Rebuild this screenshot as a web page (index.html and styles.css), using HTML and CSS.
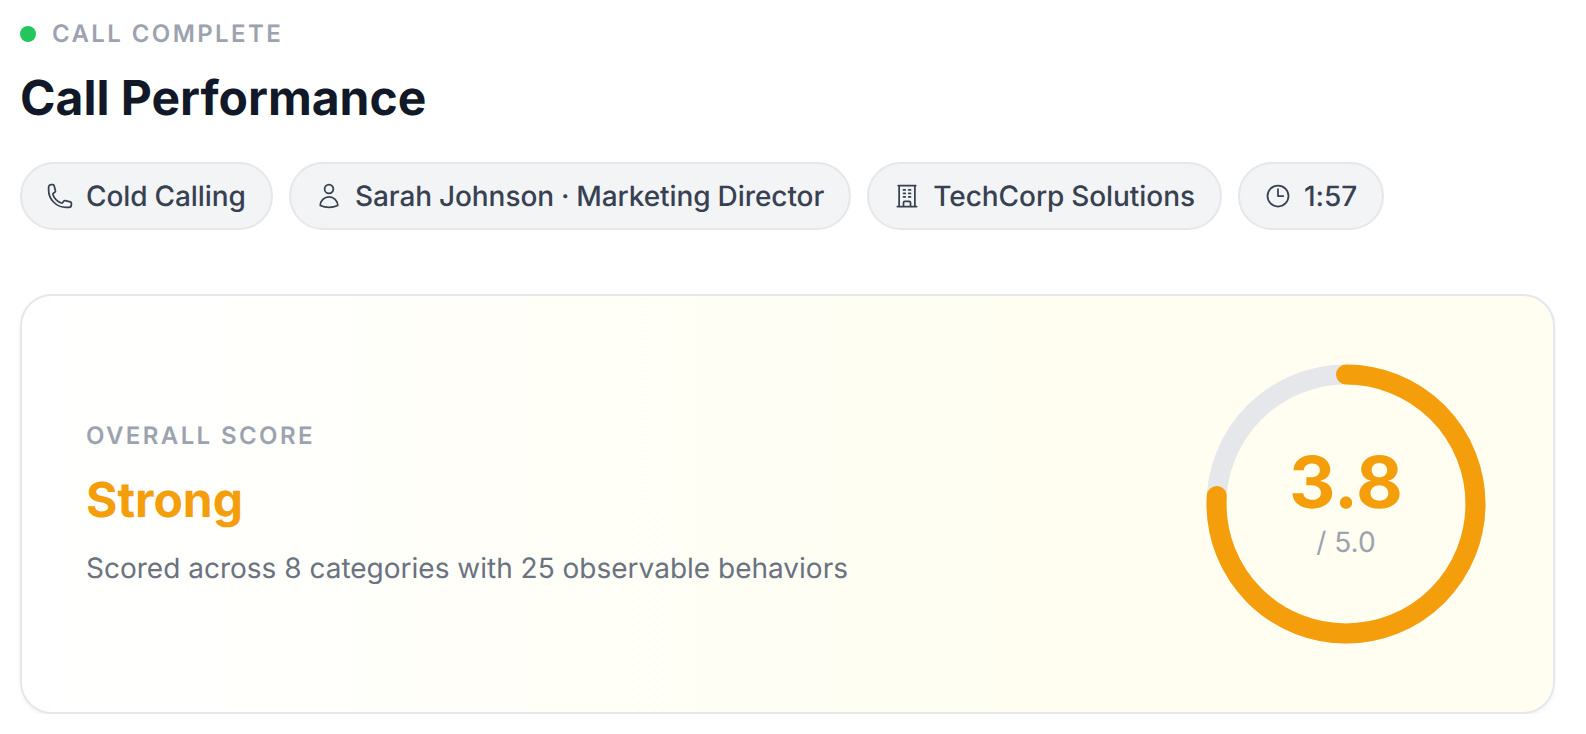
FILE: index.html
```html
<!DOCTYPE html>
<html lang="en">
<head>
    <meta charset="UTF-8">
    <meta name="viewport" content="width=device-width, initial-scale=1.0">
    <title>Call Performance</title>
    <link rel="stylesheet" href="styles.css">
</head>
<body>

    <div class="status">
        <span class="status-dot"></span>
        <span class="status-text">CALL COMPLETE</span>
    </div>

    <h1>Call Performance</h1>

    <div class="chips">
        <div class="chip">
            <svg class="chip-icon" viewBox="0 0 24 24"><path d="M2.25 6.75c0 8.284 6.716 15 15 15h2.25a2.25 2.25 0 002.25-2.25v-1.372c0-.516-.351-.966-.852-1.091l-4.423-1.106c-.44-.11-.902.055-1.173.417l-.97 1.293c-.282.376-.769.542-1.21.38a12.035 12.035 0 01-7.143-7.143c-.162-.441.004-.928.38-1.21l1.293-.97c.363-.271.527-.734.417-1.173L6.963 3.102a1.125 1.125 0 00-1.091-.852H4.5A2.25 2.25 0 002.25 4.5v2.25z"/></svg>
            Cold Calling
        </div>
        <div class="chip">
            <svg class="chip-icon" viewBox="0 0 24 24"><path d="M15.75 6a3.75 3.75 0 11-7.5 0 3.75 3.75 0 017.5 0zM4.501 20.118a7.5 7.5 0 0114.998 0A17.933 17.933 0 0112 21.75c-2.676 0-5.216-.584-7.499-1.632z"/></svg>
            Sarah Johnson · Marketing Director
        </div>
        <div class="chip">
            <svg class="chip-icon" viewBox="0 0 24 24"><path d="M3.75 21h16.5M4.5 3h15M5.25 3v18m13.5-18v18M9 6.75h1.5m-1.5 3h1.5m-1.5 3h1.5m3-6H15m-1.5 3H15m-1.5 3H15M9 21v-3.375c0-.621.504-1.125 1.125-1.125h3.75c.621 0 1.125.504 1.125 1.125V21"/></svg>
            TechCorp Solutions
        </div>
        <div class="chip">
            <svg class="chip-icon" viewBox="0 0 24 24"><path d="M12 6v6h4.5m4.5 0a9 9 0 11-18 0 9 9 0 0118 0z"/></svg>
            1:57
        </div>
    </div>

    <div class="score-card">
        <div class="score-info">
            <div class="score-label">OVERALL SCORE</div>
            <div class="score-rating">Strong</div>
            <div class="score-note">Scored across 8 categories with 25 observable behaviors</div>
        </div>
        <div class="ring">
            <svg class="ring-svg" viewBox="0 0 280 280">
                <circle class="ring-track" cx="140" cy="140" r="129.5"/>
                <circle class="ring-fill" cx="140" cy="140" r="129.5" pathLength="100" stroke-dasharray="76 100" transform="rotate(-90 140 140)"/>
            </svg>
            <div class="ring-text">
                <div class="ring-value">3.8</div>
                <div class="ring-max">/ 5.0</div>
            </div>
        </div>
    </div>

</body>
</html>
```

FILE: styles.css
```css
body {
    margin: 0;
    padding: 20px 31px 0 20px;
    background: #fff;
    font-family: Inter, "Liberation Sans", sans-serif;
    text-rendering: geometricPrecision;
}
.status {
    display: flex;
    align-items: center;
    gap: 16px;
    height: 27px;
}
.status-dot {
    width: 16px;
    height: 16px;
    border-radius: 50%;
    background-color: #22c55e;
}
.status-text {
    font-size: 24px;
    font-weight: 600;
    letter-spacing: 2.4px;
    color: #9ca3af;
}
h1 {
    margin: 21px 0 34px;
    font-size: 48px;
    line-height: 60px;
    font-weight: 700;
    color: #111827;
}
.chips {
    display: flex;
    gap: 16px;
    margin-bottom: 64px;
}
.chip {
    display: flex;
    align-items: center;
    gap: 12px;
    height: 68px;
    box-sizing: border-box;
    padding: 0 25px 0 24px;
    border: 2px solid #e5e7eb;
    border-radius: 34px;
    background-color: #f3f4f6;
    font-size: 28px;
    font-weight: 500;
    letter-spacing: -0.05px;
    word-spacing: -0.6px;
    color: #374151;
}
.chip-icon {
    width: 28px;
    height: 28px;
    fill: none;
    stroke: #374151;
    stroke-width: 1.5;
    stroke-linecap: round;
    stroke-linejoin: round;
}
.score-card {
    display: flex;
    align-items: center;
    justify-content: space-between;
    height: 420px;
    box-sizing: border-box;
    padding: 0 67px 0 64px;
    border: 2px solid #e5e7eb;
    border-radius: 32px;
    background: linear-gradient(90deg, #ffffff, #fffef0 70%);
    box-shadow: 0 2px 4px rgba(0, 0, 0, 0.05);
}
.score-info {
    margin-bottom: 2px;
}
.score-label {
    font-size: 24px;
    font-weight: 600;
    letter-spacing: 2.4px;
    color: #9ca3af;
}
.score-rating {
    margin: 20px 0 22px;
    font-size: 48px;
    font-weight: 700;
    color: #f59e0b;
}
.score-note {
    font-size: 28px;
    color: #6b7280;
}
.ring {
    position: relative;
    width: 280px;
    height: 280px;
}
.ring-svg {
    display: block;
    width: 280px;
    height: 280px;
}
.ring-track {
    fill: none;
    stroke: #e5e7eb;
    stroke-width: 20;
}
.ring-fill {
    fill: none;
    stroke: #f59e0b;
    stroke-width: 20;
    stroke-linecap: round;
}
.ring-text {
    position: absolute;
    inset: 0;
    display: flex;
    flex-direction: column;
    align-items: center;
    justify-content: center;
}
.ring-value {
    font-size: 72px;
    line-height: 76px;
    font-weight: 700;
    color: #f59e0b;
}
.ring-max {
    font-size: 28px;
    line-height: 42px;
    color: #9ca3af;
}
```
